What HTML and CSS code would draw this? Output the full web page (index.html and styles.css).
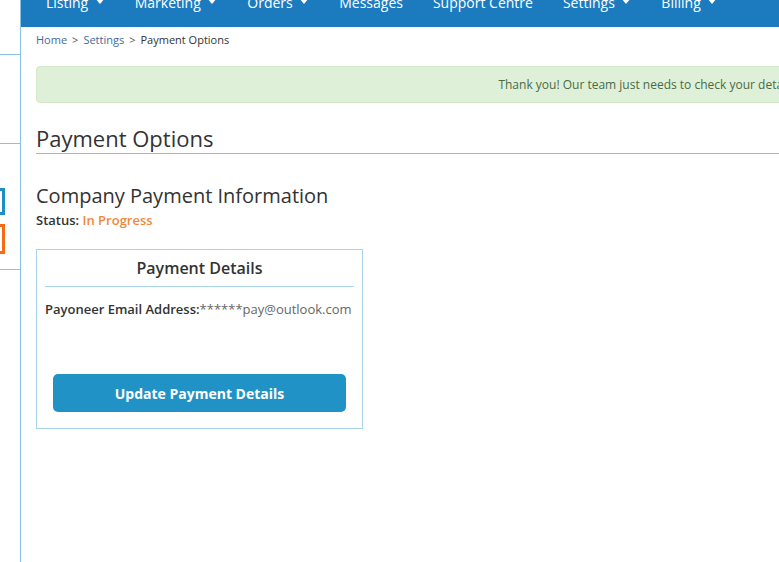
FILE: index.html
```html
<!DOCTYPE html>
<html lang="en">
<head>
<meta charset="utf-8">
<title>Payment Options</title>
<link rel="stylesheet" href="styles.css">
</head>
<body>
<div class="page">
  <aside class="sidebar">
    <div class="side-block side-top"></div>
    <div class="side-block side-mid"></div>
    <div class="side-block side-btns">
      <span class="side-btn side-btn-blue"></span>
      <span class="side-btn side-btn-orange"></span>
    </div>
  </aside>
  <main class="main">
    <nav class="topnav">
      <a class="nav-item">Listing <span class="caret"></span></a>
      <a class="nav-item">Marketing <span class="caret"></span></a>
      <a class="nav-item">Orders <span class="caret"></span></a>
      <a class="nav-item">Messages</a>
      <a class="nav-item">Support Centre</a>
      <a class="nav-item">Settings <span class="caret"></span></a>
      <a class="nav-item">Billing <span class="caret"></span></a>
    </nav>
    <div class="content">
      <div class="breadcrumb">
        <a class="crumb-link">Home</a><span class="sep">&gt;</span><a class="crumb-link">Settings</a><span class="sep">&gt;</span><span class="crumb-current">Payment Options</span>
      </div>
      <div class="alert">Thank you! Our team just needs to check your details and we will be in touch soon.</div>
      <h2 class="page-title">Payment Options</h2>
      <h3 class="section-title">Company Payment Information</h3>
      <div class="status">Status: <span class="status-value">In Progress</span></div>
      <div class="card">
        <div class="card-title">Payment Details</div>
        <div class="card-row"><span class="label">Payoneer Email Address:</span><span class="value">******pay@outlook.com</span></div>
        <button class="btn">Update Payment Details</button>
      </div>
    </div>
  </main>
</div>
</body>
</html>
```
FILE: styles.css
```css
html, body {
  margin: 0;
  padding: 0;
  height: 100%;
  overflow: hidden;
  background: #fff;
}
body {
  font-family: "Open Sans", "Liberation Sans", sans-serif;
  color: #333;
}
.page {
  display: flex;
  height: 562px;
}
.sidebar {
  width: 20px;
  flex: 0 0 20px;
  border-right: 1px solid #86c3e5;
  display: flex;
  flex-direction: column;
}
.side-block {
  border-bottom: 1px solid #86c3e5;
}
.side-top { height: 54px; }
.side-mid { height: 88px; }
.side-btns {
  height: 126px;
  display: flex;
  flex-direction: column;
  padding-top: 44px;
  box-sizing: border-box;
}
.side-btn {
  display: block;
  width: 5px;
  box-sizing: border-box;
  border: 3px solid #1e8fc6;
  border-left: none;
}
.side-btn-blue { height: 27px; }
.side-btn-orange {
  height: 30px;
  margin-top: 9px;
  border-color: #f56a14;
}
.main {
  flex: 0 0 auto;
  width: 1416px;
}
.topnav {
  height: 27px;
  background: #1c7bbf;
  display: flex;
  align-items: flex-end;
  padding: 0 0 14px 10px;
  box-sizing: border-box;
}
.nav-item {
  color: #fff;
  font-size: 14px;
  line-height: 20px;
  padding: 0 15px;
  display: flex;
  align-items: center;
  white-space: nowrap;
}
.caret {
  display: inline-block;
  width: 0;
  height: 0;
  margin-left: 6.5px;
  border-left: 5.5px solid transparent;
  border-right: 5.5px solid transparent;
  border-top: 6px solid #fff;
  position: relative;
  top: -2px;
}
.content {
  padding: 0 15px;
}
.breadcrumb {
  margin-top: 5px;
  font-size: 11px;
  line-height: 16px;
  color: #333;
}
.crumb-link { color: #3f6b9c; }
.sep {
  color: #555;
  margin: 0 5px;
}
.crumb-current { color: #333; }
.alert {
  margin-top: 18px;
  background: #dff0d8;
  border: 1px solid #d3e9c7;
  border-radius: 4px;
  color: #4a6b45;
  font-size: 12px;
  line-height: 17px;
  padding: 9px 15px;
  text-align: center;
}
.page-title {
  margin: 20px 0 0;
  font-size: 22px;
  font-weight: 400;
  line-height: 30px;
  color: #333;
  border-bottom: 1px solid #8cbde0;
}
.section-title {
  margin: 28px 0 0;
  font-size: 20px;
  font-weight: 400;
  line-height: 27px;
  color: #333;
}
.status {
  margin-top: 2px;
  font-size: 13px;
  line-height: 18px;
  font-weight: 600;
  color: #333;
}
.status-value { color: #f0883a; }
.card {
  margin-top: 20px;
  width: 327px;
  box-sizing: border-box;
  border: 1px solid #a8d4ea;
  padding: 7px 8px 16px;
}
.card-title {
  font-size: 16px;
  font-weight: 600;
  line-height: 22px;
  text-align: center;
  padding-bottom: 7px;
  border-bottom: 1px solid #a8d4ea;
  color: #333;
}
.card-row {
  margin-top: 13px;
  font-size: 13px;
  line-height: 18px;
  white-space: nowrap;
}
.label { font-weight: 600; color: #333; }
.value { color: #666; }
.btn {
  display: block;
  margin: 56px 8px 0;
  width: calc(100% - 16px);
  height: 38px;
  border: none;
  border-radius: 5px;
  background: #2192c6;
  color: #fff;
  font-family: "Open Sans", "Liberation Sans", sans-serif;
  font-size: 14px;
  font-weight: 700;
  cursor: pointer;
}
```
